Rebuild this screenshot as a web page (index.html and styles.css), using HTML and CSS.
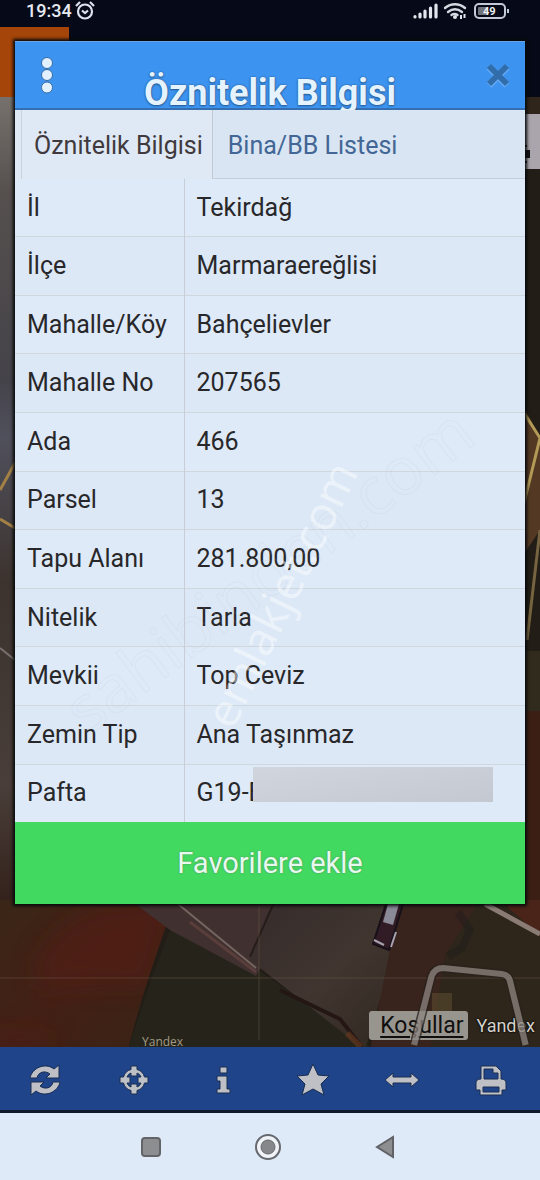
FILE: index.html
```html
<!DOCTYPE html>
<html lang="tr">
<head>
<meta charset="utf-8">
<meta name="viewport" content="width=device-width, initial-scale=1">
<title>Öznitelik Bilgisi</title>
<link rel="stylesheet" href="styles.css">
</head>
<body>
<div class="screen">
  <svg class="backdrop" viewBox="0 0 540 1180" preserveAspectRatio="none" aria-hidden="true">
    <defs>
      <linearGradient id="edge" x1="0" y1="0" x2="0" y2="1">
        <stop offset="0" stop-color="#77716d"/><stop offset=".12" stop-color="#55504e"/><stop offset=".35" stop-color="#45434a"/>
        <stop offset=".42" stop-color="#50505c"/><stop offset=".6" stop-color="#3c332e"/><stop offset=".85" stop-color="#493e39"/><stop offset="1" stop-color="#33201a"/>
      </linearGradient>
      <linearGradient id="soil" x1="0" y1="0" x2="1" y2="1">
        <stop offset="0" stop-color="#3a2617"/><stop offset=".5" stop-color="#432015"/><stop offset="1" stop-color="#392416"/>
      </linearGradient>
      <linearGradient id="yard" x1="0" y1="0" x2="1" y2="1">
        <stop offset="0" stop-color="#352b2b"/><stop offset=".5" stop-color="#40352f"/><stop offset="1" stop-color="#302620"/>
      </linearGradient>
      <filter id="soft" x="-50%" y="-50%" width="200%" height="200%"><feGaussianBlur stdDeviation="12"/></filter>
      <clipPath id="field"><path d="M0 900H175C158 950 143 990 128 1050H0Z"/></clipPath>
    </defs>
    <rect width="540" height="1180" fill="#221d16"/>
    <rect width="540" height="110" fill="#060a18"/>
    <rect y="27" width="69" height="70" fill="#a5450a"/>
    <rect y="97" width="20" height="810" fill="url(#edge)"/>
    <path d="M15 463 0 490M0 519 15 528" stroke="#a38145" stroke-width="3"/>
    <path d="M0 648 15 660" stroke="#77706f" stroke-width="2"/>
    <rect x="520" y="97" width="20" height="17" fill="#30251b"/>
    <rect x="520" y="114" width="20" height="55" fill="#aaa5ad"/>
    <path d="M525 150h5v8h-5zM525 145h2v2h-2zM525 161h2v2h-2z" fill="#111"/>
    <path d="M520 400 540 437V530L520 560Z" fill="#533923"/>
    <path d="M524 413 540 438 524 503" fill="none" stroke="#b39a56" stroke-width="3"/>
    <path d="M540 530 527 640" stroke="#766340" stroke-width="3"/>
    <path d="M520 651h20v60h-20z" fill="#302b1c"/>
    <path d="M520 711h20v200h-20z" fill="#3b1f15"/>
    <path d="M0 900H175C158 950 143 990 128 1050H0Z" fill="url(#soil)"/>
    <g clip-path="url(#field)"><g filter="url(#soft)" fill="#5a1c14" opacity=".5">
      <path d="M90 910 170 900 150 985 85 985 40 990 35 960 60 930Z"/><ellipse cx="20" cy="1040" rx="40" ry="7"/>
    </g></g>
    <path d="M175 918C150 980 143 1005 128 1050H375L255 968Z" fill="#26241a"/>
    <path d="M130 900H300L256 976 170 930Z" fill="#40302f"/>
    <path d="M178 904 256 968" stroke="#756560" stroke-width="2"/>
    <path d="M190 922 256 972" stroke="#593e3b" stroke-width="3"/>
    <path d="M275 900H410L365 1050 250 960Z" fill="url(#yard)"/>
    <path d="M275 900 250 957" stroke="#251d19" stroke-width="2"/>
    <path d="M400 900H480L445 1050H370Z" fill="#38231d"/>
    <path d="M480 900H540V1050H430L445 955Z" fill="#2e261b"/>
    <path d="M500 900H540V936Z" fill="#4a2418"/>
    <path d="M485 904 540 934" stroke="#8a7b75" stroke-width="5"/>
    <path d="M458 912 470 930 462 948 448 956" fill="none" stroke="#1e1b1c" stroke-width="8" opacity=".4"/>
    <path d="M386 904H403L389 950 373 944Z" fill="#311c25" stroke="#171018" stroke-width="2"/>
    <path d="M388 904H399L393 925 383 922Z" fill="#898997"/>
    <path d="M396 932 391 947M374 940 384 945" stroke="#a7a1b0" stroke-width="2"/>
    <path d="M432 993H452V1013H432Z" fill="#625132" opacity=".5"/>
    <path d="M280 990 340 1019 362 1047" fill="none" stroke="#241713" stroke-width="4"/>
    <path d="M347 1033 361 1047" stroke="#62371f" stroke-width="6" opacity=".7"/>
    <path d="M0 978H540M259 904V1040" stroke="#6a5946" opacity=".5"/>
    <text class="map-label" x="142" y="1046">Yandex</text>
  </svg>

  <header class="status">
    <time>19:34</time>
    <svg class="alarm" viewBox="0 0 20 20" fill="none" stroke="#dce2ee" stroke-width="2.2"><circle cx="10" cy="10.500" r="7"/><path d="m7 9.500 3 2.500 3-2.500"/><path d="m1 5 4-4M15 1l4 4"/></svg>
    <svg class="radio" viewBox="0 0 98 18" aria-hidden="true">
      <g stroke="#e3e6ed" stroke-width="3.200" stroke-linecap="round"><path d="M3 14.500v.500M8 12v3M13 9v6M18.500 6v9M24 3v12"/></g>
      <g fill="none" stroke="#d4d8e1" stroke-width="2.400" stroke-linecap="round"><path d="M33 6c6-5 14-5 20 0M36 10c4.500-3.500 9.500-3.500 14 0M39.500 13c2-1.500 4-1.500 6 0"/></g>
      <circle cx="43" cy="15" r="2" fill="#e3e6ed"/><path d="M49 13v4M52.500 12v4" stroke="#e3e6ed" stroke-width="2"/>
      <rect x="63" y="2" width="30" height="14" rx="4" fill="none" stroke="#c3c9d6" stroke-width="2"/>
      <rect x="66" y="5" width="9" height="8" rx="1" fill="#70747c"/><path d="M96 7v4" stroke="#c3c9d6" stroke-width="2"/>
      <text class="battery" x="71" y="13">49</text>
    </svg>
  </header>

  <main class="map">
    <section class="dialog" aria-labelledby="title">
      <header class="dialog-head">
        <button class="icon-button" aria-label="Menü"><svg width="14" height="38" viewBox="0 0 14 38" fill="#e3f1ff" stroke="#356ca6"><circle cx="7" cy="7" r="5.500"/><circle cx="7" cy="19" r="5.500"/><circle cx="7" cy="31.500" r="5.500"/></svg></button>
        <h1 id="title">Öznitelik Bilgisi</h1>
        <button class="icon-button close" aria-label="Kapat"><svg width="28" height="28" viewBox="0 0 28 28" fill="none"><path d="m5 6 18 18M23 6 5 24" stroke="#68adf5" stroke-width="7"/><path d="m5 5 18 18M23 5 5 23" stroke="#326dab" stroke-width="6"/></svg></button>
      </header>
      <nav class="tabs">
        <button class="tab active">Öznitelik Bilgisi</button>
        <button class="tab link">Bina/BB Listesi</button>
      </nav>
      <table class="attributes">
        <tbody>
        <tr><th scope="row">İl</th><td>Tekirdağ</td></tr>
        <tr><th scope="row">İlçe</th><td>Marmaraereğlisi</td></tr>
        <tr><th scope="row">Mahalle/Köy</th><td>Bahçelievler</td></tr>
        <tr><th scope="row">Mahalle No</th><td>207565</td></tr>
        <tr><th scope="row">Ada</th><td>466</td></tr>
        <tr><th scope="row">Parsel</th><td>13</td></tr>
        <tr><th scope="row">Tapu Alanı</th><td>281.800,00</td></tr>
        <tr><th scope="row">Nitelik</th><td>Tarla</td></tr>
        <tr><th scope="row">Mevkii</th><td>Top Ceviz</td></tr>
        <tr><th scope="row">Zemin Tip</th><td>Ana Taşınmaz</td></tr>
        <tr><th scope="row">Pafta</th><td class="sheet">G19-E<span class="mask"></span></td></tr>
        </tbody>
      </table>
      <button class="favourite">Favorilere ekle</button>
      <svg class="watermark" viewBox="0 0 510 863" aria-hidden="true">
        <text class="mark-faint" transform="translate(72 696) rotate(-37)">sahibinden.com</text>
        <text class="mark-light" transform="translate(218 690) rotate(-64)">emlakjet.com</text>
      </svg>
    </section>
    <footer class="credits">
      <a class="terms" href="#kosullar">Koşullar</a>
      <span class="provider">Yandex</span>
      <svg class="road" viewBox="0 0 120 88" preserveAspectRatio="none" fill="none" aria-hidden="true"><path d="M3 86 20 17Q23 9 31 9L88 15Q95 16 96 23L111 86" stroke="#28221d" stroke-width="9"/><path d="M3 86 20 17Q23 9 31 9L88 15Q95 16 96 23L111 86" stroke="#8d8580" stroke-width="6"/></svg>
    </footer>
  </main>

  <nav class="toolbar">
    <button aria-label="Yenile"><svg viewBox="0 0 32 32"><path d="M1 14C3 4 16-2 25 5L30 1V14H17L21 10C16 6 9 8 8 14ZM31 18C29 28 16 34 7 27L2 31V18H15L11 22C16 26 23 24 24 18Z"/></svg></button>
    <button aria-label="Konum"><svg viewBox="0 0 32 32"><path fill-rule="evenodd" d="M13 2h6v3.500Q25 7 26.500 13H30v6h-3.500Q25 25 19 26.500V30h-6v-3.500Q7 25 5.500 19H2v-6h3.500Q7 7 13 5.500ZM13 9Q10 10 9 13h3v6H9q1 3 4 4v-3h6v3q3-1 4-4h-3v-6h3q-1-3-4-4v3h-6Z"/></svg></button>
    <button aria-label="Bilgi"><svg viewBox="0 0 32 32"><path d="M13 3h7v6h-7ZM10 12h10v13h3v4H10v-4h3v-8h-3Z"/></svg></button>
    <button aria-label="Favoriler"><svg viewBox="0 0 32 32"><path d="m16 0 5 11 11 1-8 8 3 11-11-6-11 6 3-11-8-8 11-1Z"/></svg></button>
    <button aria-label="Ölçüm"><svg viewBox="0 0 36 32"><path d="m1 16 8-7v4h18V9l8 7-8 7v-4H9v4Z"/></svg></button>
    <button aria-label="Yazdır"><svg viewBox="0 0 32 32"><path fill-rule="evenodd" d="M6 2h15l5 5v8q5 0 5 4v7h-4v5H5v-5H1v-7q0-4 5-4ZM9 5v10h14V9h-5V5ZM8 23v5h16v-5Z"/></svg></button>
  </nav>

  <nav class="system">
    <button aria-label="Son uygulamalar"><svg width="20" height="20" viewBox="0 0 20 20"><rect x="1" y="1" width="18" height="18" rx="3" fill="#8d8e90" stroke="#626467" stroke-width="2"/></svg></button>
    <button aria-label="Ana ekran"><svg width="28" height="28" viewBox="0 0 28 28"><circle cx="14" cy="14" r="12" fill="#f0f3f8" stroke="#66696d" stroke-width="2"/><circle cx="14" cy="14" r="7" fill="#85878a" stroke="#66696d"/></svg></button>
    <button aria-label="Geri"><svg width="20" height="24" viewBox="0 0 20 24"><path d="M2 12 18 2v20Z" fill="#8d8e90" stroke="#606266" stroke-width="2"/></svg></button>
  </nav>
</div>
</body>
</html>
```
FILE: styles.css
```css
* { box-sizing: border-box; }

body {
  margin: 0;
  font-family: Roboto, "Liberation Sans", sans-serif;
  font-size: 25px;
  color: #28272a;
}

button {
  margin: 0;
  padding: 0;
  border: 0;
  background: none;
  font: inherit;
  color: inherit;
}

svg { display: block; }

.screen {
  position: relative;
  isolation: isolate;
  display: flex;
  flex-direction: column;
  min-height: 100vh;
}

.backdrop {
  position: absolute;
  inset: 0;
  z-index: -1;
  width: 100%;
  height: 100%;
}

.map-label {
  font-family: "Open Sans", sans-serif;
  font-size: 12px;
  fill: #a49b86;
}

.status {
  display: flex;
  align-items: center;
  height: 26px;
  padding: 0 30px 4px 26px;
  gap: 3px;
  color: #e5e9f1;
  font-size: 18px;
  font-weight: 500;
  line-height: 22px;
}

.alarm { width: 20px; height: 20px; }
.radio { width: 98px; height: 18px; margin-left: auto; }
.battery { font-size: 11px; font-weight: 700; fill: #eef0f5; }

.map {
  display: flex;
  flex: 1;
  flex-direction: column;
  padding: 15px 15px 7px;
}

.dialog {
  position: relative;
  background: #deeaf7;
  box-shadow: 0 0 3px 2px #07090b;
}

.dialog-head {
  display: grid;
  grid-template-columns: 64px 1fr 64px;
  align-items: center;
  height: 69px;
  background: #3d94f0;
  border-top: 1px solid #68a5e6;
  border-bottom: 2px solid #3470b1;
}

.dialog-head h1 {
  align-self: end;
  margin: 0;
  font-size: 36px;
  font-weight: 700;
  line-height: 30px;
  text-align: center;
  white-space: nowrap;
  color: #e5f3ff;
  text-shadow: 0 0 2px #204f84, 0 1px 2px #2a6098;
}

.icon-button { display: grid; place-items: center; height: 100%; }
.close { padding-left: 10px; }

.tabs {
  display: flex;
  height: 69px;
  padding-left: 6px;
  background: #dfe9f5;
}

.tab { padding-top: 3px; line-height: 32px; white-space: nowrap; }

.active {
  padding-right: 9px;
  padding-left: 12px;
  border-right: 1px solid #bfc8d4;
  border-left: 1px solid #cbd2dc;
  color: #40393d;
}

.link {
  flex: 1;
  padding-top: 4px;
  padding-left: 15px;
  border-bottom: 1px solid #c6ced8;
  background: #d9e5f2;
  color: #426695;
  text-align: left;
}

.attributes {
  width: 100%;
  height: 643px;
  border-collapse: collapse;
  table-layout: fixed;
  line-height: 32px;
}

.attributes th,
.attributes td {
  padding: 0 12px;
  font-weight: 400;
  text-align: left;
  white-space: nowrap;
}

.attributes th { width: 169px; border-right: 1px solid #c8ced8; }
.attributes tr + tr { border-top: 1px solid #d0d6dd; }
.attributes tr:nth-child(even) { background: #dce8f6; }

.sheet { position: relative; }

.mask {
  position: absolute;
  top: 2px;
  right: 32px;
  bottom: 20px;
  left: 68px;
  background: linear-gradient(170deg, #d1d5dd, #c4c8d1);
}

.favourite {
  display: block;
  width: 100%;
  height: 82px;
  background: #42d960;
  color: #e7f9ee;
  font-size: 29px;
  text-shadow: 0 0 2px #528760;
}

.watermark {
  position: absolute;
  inset: 0;
  width: 100%;
  height: 100%;
  pointer-events: none;
}

.mark-light {
  font-family: "Open Sans", sans-serif;
  font-size: 46px;
  fill: #ffffff;
  opacity: .45;
}

.mark-faint {
  font-family: "Open Sans", sans-serif;
  font-size: 66px;
  fill: none;
  stroke: #b4bed0;
  opacity: .15;
}

.credits {
  position: relative;
  display: flex;
  align-items: center;
  justify-content: flex-end;
  gap: 8px;
  margin: auto -10px 0 0;
  font-size: 18px;
}

.terms {
  padding: 0 5px 0 11px;
  border-radius: 3px;
  background: #98958f;
  color: #100f0e;
  font-size: 23px;
  line-height: 29px;
  text-underline-offset: 3px;
}

.provider { color: #d5d1ca; text-shadow: 0 0 2px #000, 0 0 2px #000; }

.road {
  position: absolute;
  right: 0;
  bottom: -7px;
  width: 124px;
  height: 88px;
  opacity: .75;
  pointer-events: none;
}

.toolbar {
  display: grid;
  grid-template-columns: repeat(6, 1fr);
  height: 66px;
  padding: 3px 4px 0 0;
  background: #20448a;
  border-bottom: 3px solid #101a2c;
}

.toolbar button { display: grid; place-items: center; }

.toolbar svg {
  height: 32px;
  overflow: visible;
  fill: #bfc0c5;
  stroke: #182c50;
  stroke-width: 1;
}

.system {
  display: grid;
  grid-template-columns: repeat(3, 117px);
  justify-content: center;
  height: 67px;
  padding-right: 4px;
  background: #dfeaf8;
}

.system button { display: grid; place-items: center; }
```
